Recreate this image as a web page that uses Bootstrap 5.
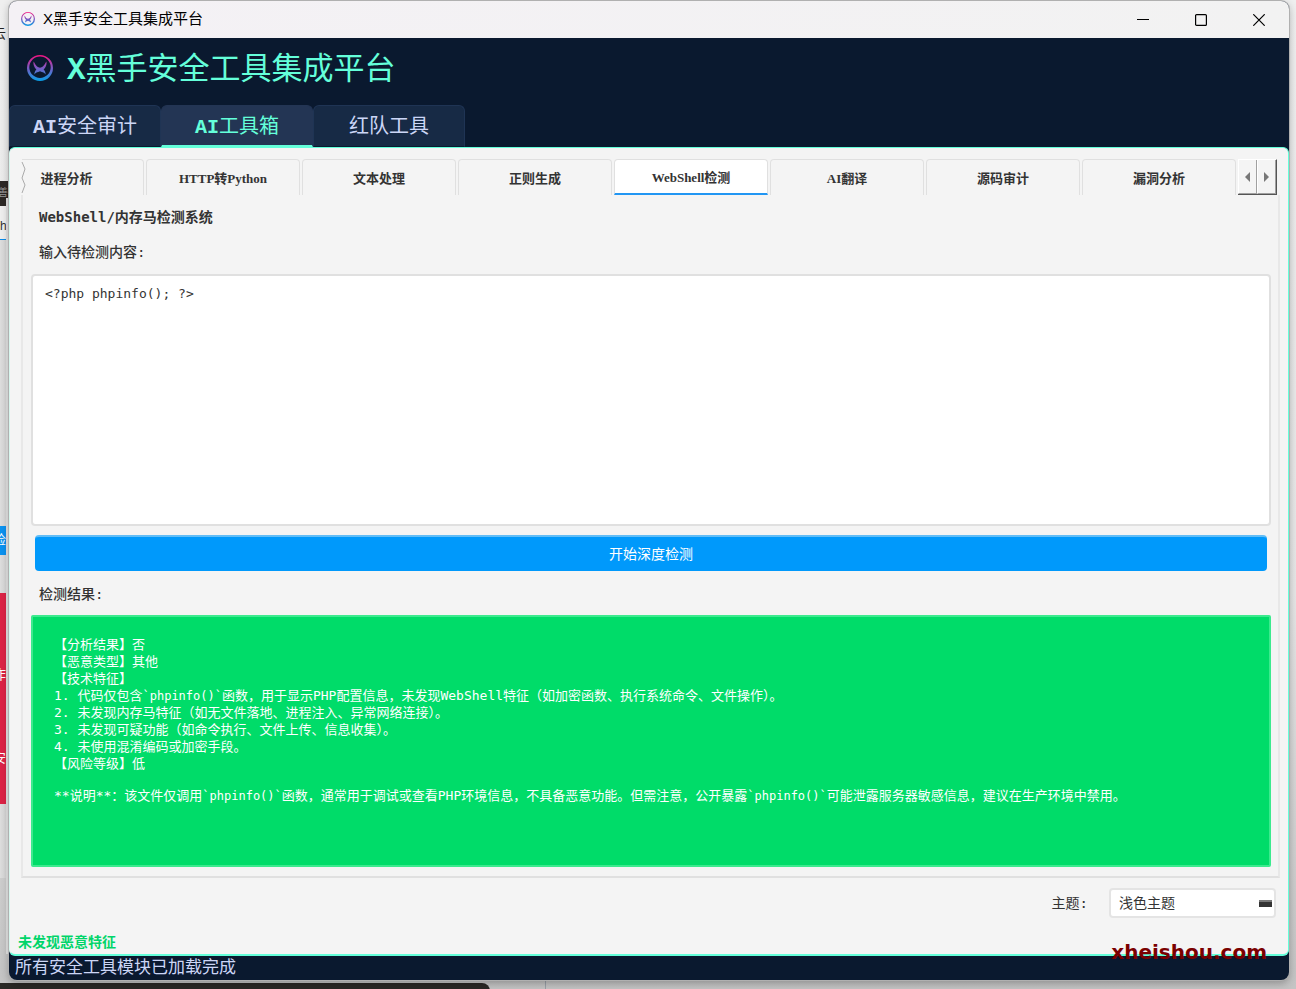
<!DOCTYPE html>
<html lang="zh-CN">
<head>
<meta charset="utf-8">
<meta name="viewport" content="width=device-width, initial-scale=1">
<title>X黑手安全工具集成平台</title>
<link href="https://cdn.jsdelivr.net/npm/bootstrap@5.3.0/dist/css/bootstrap.min.css" rel="stylesheet">
<style>
:root{--navy:#0a192f;--navy-2:#172a45;--navy-3:#233554;--mint:#64ffda;--pale:#ccd6f6;--paper:#f4f4f4;--line:#e0e0e0;--ink:#333}
body{background:linear-gradient(#efefef,#e6e6e6 60%,#c4c4c4);font-family:"Liberation Sans","Noto Sans CJK SC",sans-serif;font-size:14px;line-height:20px;color:var(--ink)}
button{border:0;background:none;padding:0;color:inherit}
/* desktop behind the window */
.desk{position:absolute;inset:0;overflow:hidden;z-index:0}
.desk div{position:absolute;overflow:hidden;left:0;width:9px;text-indent:-7px;font-size:13px;line-height:16px;white-space:nowrap}
.desk .d-shade{top:240px;height:638px;background:linear-gradient(90deg,#dedede,#d2d2d2)}
.desk .d-text{top:26px;height:18px;color:#222}
.desk .d-dark{top:181px;height:25px;padding-top:4px;background:#2c2926;color:#999;text-indent:-2px;font-size:10px}
.desk .d-tab{top:206px;height:35px;background:#efefef;border-bottom:2px solid #0a8bea;padding-top:12px;text-indent:0;font-size:12px}
.desk .d-blue{top:526px;height:29px;padding-top:6px;background:#0a93f0;color:#fff}
.desk .d-red{top:593px;height:211px;background:#dc2446;color:#fff;padding-top:74px}
.desk .d-red span{display:block;height:83px}
.desk .d-edge{left:6px;width:4px;top:198px;height:756px;background:linear-gradient(90deg,#e2e2e2,#f4f4f4)}
.desk .d-bar{top:983px;width:490px;height:20px;background:#2a2825;border-radius:0 8px 0 0}
.desk .d-rule{left:545px;width:1px;top:0;height:100%;background:#9aa0a8}
.app-window{position:relative;z-index:1;margin:1px 7px 9px 9px;min-height:calc(100vh - 10px);border-radius:8px;overflow:hidden;background:var(--navy);box-shadow:0 0 0 1px #b0b0b0,0 3px 8px rgba(0,0,0,.3)}
.titlebar{height:37px;background:linear-gradient(90deg,#f4f1f5,#f2f2f2);color:#000;font-size:15px;padding:0 1px 2px 12px}
.win-btn{width:58px;height:35px}
.brand-row{height:67px;padding:0 18px 7px}
.brand-name{font:700 31px/40px "Liberation Mono",monospace;color:var(--mint);margin:0 0 0 14px}
.brand-name span{font-family:"Noto Sans CJK SC",sans-serif;font-weight:400}
.main-tabs .nav-link{width:152px;height:42px;padding:4px 0 0;border:1px solid #1f3454;border-bottom-color:var(--navy);border-radius:6px 6px 0 0;margin:0;background:var(--navy-2);color:var(--pale);font:400 20px/36px "Liberation Mono","Noto Sans CJK SC",monospace}
.main-tabs .nav-link.active{background:var(--navy-3);color:var(--mint);border-color:var(--navy-3);border-bottom:2px solid var(--mint)}
.main-panel{background:var(--paper);border:1px solid var(--mint);border-left-color:#d8f6ee;border-bottom-width:2px;border-radius:6px}
.sub-bar{padding:11px 11px 0 12px;column-gap:2px}
.sub-tabs{column-gap:2px}
.sub-tabs .nav-item{flex:154 1 0;min-width:0}
.sub-tabs .cut-item{flex-grow:122}
.sub-tabs .nav-link{width:100%;height:36px;margin:0;padding:2px 0 0;border:1px solid var(--line);border-width:1px 1px 0;border-radius:4px 4px 0 0;background:var(--paper);color:var(--ink);font:700 13px/20px "Liberation Serif","Noto Sans CJK SC",serif;white-space:nowrap}
.sub-tabs .cut-item .nav-link{border-left:0;border-radius:0 4px 0 0;padding-right:32px}
.sub-tabs .nav-link.active{background:#fff;color:var(--ink);border-color:var(--line);border-bottom:2px solid #2196f3}
.torn{position:absolute;left:-1px;top:3px;z-index:2}
.scroll-btns{border:1px solid #fff;border-width:1px 1px 1px 0;border-right-color:#555;border-bottom-color:#555;width:39px;height:36px}
.scroll-btns button{flex:1;border-right:1px solid #a0a0a0;border-bottom:1px solid #a0a0a0;border-left:1px solid #fff;display:flex;align-items:center;justify-content:center}
.pane{margin:0 8px 0 11px;padding:12px 7px 9px 8px;border:2px solid #e8e8e8;border-top:0;border-bottom-color:var(--line)}
.mono{font-family:"DejaVu Sans Mono","Noto Sans CJK SC",monospace}
.field-label{padding-left:8px;margin:0;font-weight:500}
.code-box,.result-box{flex:1 1 210px;min-height:210px}
.code-box{border:2px solid var(--line);border-radius:4px;padding:9px 12px;font-size:13px;line-height:17px;color:var(--ink);resize:none}
.source-label{margin:15px 0 12px}
.result-label{margin-bottom:11px}
.scan-btn{height:36px;margin:9px 4px 13px;border-radius:4px;background:#0099fb;border:0;border-top:2px solid #62bdf6;color:#fff;font-size:14px;line-height:20px;padding:0}
.result-box{background:#00dc69;border:2px solid #3cea8e;border-radius:2px;color:#fff;font-size:13px;line-height:17px;padding:19px 21px}
.result-box p{margin:0 0 15px}
.result-box code{font:inherit;font-size:12px;line-height:1;color:inherit}
.theme-row{padding:10px 12px 14px}
.theme-row label{margin-right:21px}
.theme-select{width:167px;height:30px;padding:0 8px;font-size:14px;line-height:20px;color:var(--ink);border:2px solid #e4e4e4;border-radius:4px;background:linear-gradient(#777 2px,#333 2px) no-repeat right 2px center/13px 7px #fff}
.verdict{color:#00d56a;font-weight:700;padding:0 0 2px 8px}
.watermark{position:absolute;right:22px;bottom:16px;font:700 20px/24px "DejaVu Sans",sans-serif;color:#7a0000;z-index:3;text-decoration:none}
.status-line{height:24px;padding-left:6px;color:var(--pale);font-size:17px;line-height:23px}
</style>
</head>
<body>
<div class="desk" aria-hidden="true">
  <div class="d-rule"></div>
  <div class="d-text">云</div>
  <div class="d-dark">善</div>
  <div class="d-tab">h</div>
  <div class="d-shade"></div>
  <div class="d-blue">检</div>
  <div class="d-red"><span>作</span><span>安</span></div>
  <div class="d-edge"></div>
  <div class="d-bar"></div>
</div>
<svg width="0" height="0" class="position-absolute" aria-hidden="true">
  <defs>
    <linearGradient id="lg" x1="0" y1="0" x2="0" y2="26" gradientUnits="userSpaceOnUse"><stop offset="0" stop-color="#f5117f"/><stop offset=".5" stop-color="#7a5cc4"/><stop offset="1" stop-color="#069fe6"/></linearGradient>
    <symbol id="logo" viewBox="0 0 26 26">
      <path fill="url(#lg)" fill-rule="evenodd" d="M13 0a13 13 0 1 1 0 26a13 13 0 1 1 0-26zM13 1.600a10.700 10.700 0 1 0 0 21.400a10.700 10.700 0 1 0 0-21.400z"/>
      <path fill="url(#lg)" d="M6.500 6.500C8 8 8.500 11 11.500 12.200L13 12.700L14.500 12.200C17.500 11 18 8 19.500 6.500C20 10 18.600 12.600 16.600 14.400C18 15.800 18.600 17.500 18.700 19.500C17.500 18 16.400 17.300 14.800 17L13 16.200L11.200 17C9.600 17.300 8.500 18 7.300 19.500C7.400 17.500 8 15.800 9.400 14.400C7.400 12.600 6 10 6.500 6.500z"/>
    </symbol>
  </defs>
</svg>
<main class="app-window d-flex flex-column">
  <header class="titlebar d-flex align-items-center">
    <svg width="14" height="14"><use href="#logo"/></svg>
    <span class="ms-2 me-auto">X黑手安全工具集成平台</span>
    <button class="win-btn" type="button" aria-label="最小化"><svg width="12" height="12" stroke="#000"><path d="M0 5.500h12"/></svg></button>
    <button class="win-btn" type="button" aria-label="最大化"><svg width="12" height="12" fill="none" stroke="#000"><rect x=".6" y=".6" width="10.800" height="10.800" rx="1" stroke-width="1.200"/></svg></button>
    <button class="win-btn" type="button" aria-label="关闭"><svg width="12" height="12" stroke="#000" stroke-width="1.200"><path d="M.3.3l11.400 11.400M11.700.3L.3 11.700"/></svg></button>
  </header>
  <div class="brand-row d-flex align-items-center">
    <svg width="26" height="26"><use href="#logo"/></svg>
    <h1 class="brand-name">X<span>黑手安全工具集成平台</span></h1>
  </div>
  <ul class="nav nav-tabs main-tabs border-0" role="tablist">
    <li class="nav-item"><button class="nav-link" type="button" role="tab"><b>AI</b>安全审计</button></li>
    <li class="nav-item"><button class="nav-link active" type="button" role="tab" aria-selected="true"><b>AI</b>工具箱</button></li>
    <li class="nav-item"><button class="nav-link" type="button" role="tab">红队工具</button></li>
  </ul>
  <section class="main-panel d-flex flex-column flex-grow-1">
    <div class="sub-bar d-flex">
      <ul class="nav nav-tabs sub-tabs border-0 flex-nowrap flex-grow-1 position-relative" role="tablist">
        <li class="torn" aria-hidden="true"><svg class="d-block" width="5" height="31" fill="none" stroke="#aaa"><path d="M1 0l3 7l-3 9l3 7l-3 8"/></svg></li>
        <li class="nav-item cut-item"><button class="nav-link" type="button" role="tab">进程分析</button></li>
        <li class="nav-item"><button class="nav-link" type="button" role="tab">HTTP转Python</button></li>
        <li class="nav-item"><button class="nav-link" type="button" role="tab">文本处理</button></li>
        <li class="nav-item"><button class="nav-link" type="button" role="tab">正则生成</button></li>
        <li class="nav-item"><button class="nav-link active" type="button" role="tab" aria-selected="true">WebShell检测</button></li>
        <li class="nav-item"><button class="nav-link" type="button" role="tab">AI翻译</button></li>
        <li class="nav-item"><button class="nav-link" type="button" role="tab">源码审计</button></li>
        <li class="nav-item"><button class="nav-link" type="button" role="tab">漏洞分析</button></li>
      </ul>
      <div class="scroll-btns d-flex">
        <button type="button" aria-label="向左滚动"><svg width="5" height="10" fill="#777"><path d="M5 0v10L0 5z"/></svg></button>
        <button type="button" aria-label="向右滚动"><svg width="5" height="10" fill="#777"><path d="M0 0v10l5-5z"/></svg></button>
      </div>
    </div>
    <div class="pane mono d-flex flex-column flex-grow-1">
      <p class="field-label fw-bold">WebShell/内存马检测系统</p>
      <label class="field-label source-label" for="source">输入待检测内容:</label>
      <textarea id="source" class="form-control code-box mono" spellcheck="false">&lt;?php phpinfo(); ?&gt;</textarea>
      <button type="button" class="btn scan-btn">开始深度检测</button>
      <p class="field-label result-label">检测结果:</p>
      <div class="result-box">
        <p>【分析结果】否<br>【恶意类型】其他<br>【技术特征】<br>1. 代码仅包含<code>`phpinfo()`</code>函数，用于显示PHP配置信息，未发现WebShell特征（如加密函数、执行系统命令、文件操作）。<br>2. 未发现内存马特征（如无文件落地、进程注入、异常网络连接）。<br>3. 未发现可疑功能（如命令执行、文件上传、信息收集）。<br>4. 未使用混淆编码或加密手段。<br>【风险等级】低</p>
        <p class="mb-0">**说明**：该文件仅调用<code>`phpinfo()`</code>函数，通常用于调试或查看PHP环境信息，不具备恶意功能。但需注意，公开暴露<code>`phpinfo()`</code>可能泄露服务器敏感信息，建议在生产环境中禁用。</p>
      </div>
    </div>
    <div class="theme-row mono d-flex justify-content-end align-items-center">
      <label for="theme">主题:</label>
      <select id="theme" class="form-select theme-select"><option>浅色主题</option></select>
    </div>
    <div class="verdict mono">未发现恶意特征</div>
  </section>
  <footer class="status-line">所有安全工具模块已加载完成</footer>
  <a class="watermark" href="#">xheishou.com</a>
</main>
<script src="https://cdn.jsdelivr.net/npm/bootstrap@5.3.0/dist/js/bootstrap.bundle.min.js"></script>
</body>
</html>
